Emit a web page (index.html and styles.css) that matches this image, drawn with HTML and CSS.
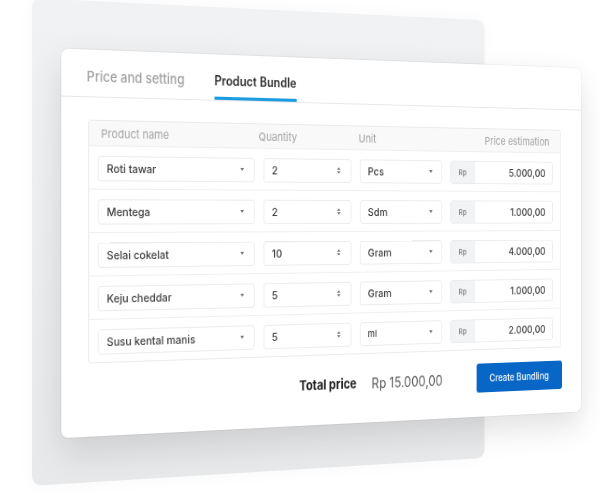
FILE: index.html
```html
<!DOCTYPE html>
<html lang="id">
<head>
<meta charset="utf-8">
<title>Product Bundle</title>
<link rel="stylesheet" href="styles.css">
</head>
<body>
<div class="scene">
  <div class="stage">
    <div class="back"></div>
    <div class="card">
      <div class="tabs">
        <div class="tab">Price and setting</div>
        <div class="tab active">Product Bundle</div>
      </div>
      <div class="content">
        <div class="table">
          <div class="thead">
            <div class="th th-name">Product name</div>
            <div class="th th-qty">Quantity</div>
            <div class="th th-unit">Unit</div>
            <div class="th th-price">Price estimation</div>
          </div>

          <div class="row">
            <div class="field select"><span>Roti tawar</span><i class="caret"></i></div>
            <div class="field select"><span>2</span><svg class="spin" viewBox="0 0 5 8"><path d="M0 3.2 2.5 0 5 3.2Z M0 4.8 2.5 8 5 4.8Z"/></svg></div>
            <div class="field select"><span>Pcs</span><i class="caret"></i></div>
            <div class="field price"><span class="addon">Rp</span><span class="val">5.000,00</span></div>
          </div>

          <div class="row">
            <div class="field select"><span>Mentega</span><i class="caret"></i></div>
            <div class="field select"><span>2</span><svg class="spin" viewBox="0 0 5 8"><path d="M0 3.2 2.5 0 5 3.2Z M0 4.8 2.5 8 5 4.8Z"/></svg></div>
            <div class="field select"><span>Sdm</span><i class="caret"></i></div>
            <div class="field price"><span class="addon">Rp</span><span class="val">1.000,00</span></div>
          </div>

          <div class="row">
            <div class="field select"><span>Selai cokelat</span><i class="caret"></i></div>
            <div class="field select"><span>10</span><svg class="spin" viewBox="0 0 5 8"><path d="M0 3.2 2.5 0 5 3.2Z M0 4.8 2.5 8 5 4.8Z"/></svg></div>
            <div class="field select"><span>Gram</span><i class="caret"></i></div>
            <div class="field price"><span class="addon">Rp</span><span class="val">4.000,00</span></div>
          </div>

          <div class="row">
            <div class="field select"><span>Keju cheddar</span><i class="caret"></i></div>
            <div class="field select"><span>5</span><svg class="spin" viewBox="0 0 5 8"><path d="M0 3.2 2.5 0 5 3.2Z M0 4.8 2.5 8 5 4.8Z"/></svg></div>
            <div class="field select"><span>Gram</span><i class="caret"></i></div>
            <div class="field price"><span class="addon">Rp</span><span class="val">1.000,00</span></div>
          </div>

          <div class="row">
            <div class="field select"><span>Susu kental manis</span><i class="caret"></i></div>
            <div class="field select"><span>5</span><svg class="spin" viewBox="0 0 5 8"><path d="M0 3.2 2.5 0 5 3.2Z M0 4.8 2.5 8 5 4.8Z"/></svg></div>
            <div class="field select"><span class="small">ml</span><i class="caret"></i></div>
            <div class="field price"><span class="addon">Rp</span><span class="val">2.000,00</span></div>
          </div>
        </div>

        <div class="footer">
          <span class="total-label">Total price</span>
          <span class="total-value">Rp 15.000,00</span>
          <span class="btn">Create Bundling</span>
        </div>
      </div>
    </div>
  </div>
</div>
</body>
</html>
```

FILE: styles.css
```css
* { box-sizing: border-box; }

html, body {
  margin: 0;
  padding: 0;
  overflow: hidden;
  background: #ffffff;
}

body {
  width: 600px;
  height: 498px;
  font-family: Inter, "Noto Sans", "Liberation Sans", sans-serif;
}

.scene {
  padding: 13px 0 0 2.5px;
}

.stage {
  display: grid;
  width: 639px;
  height: 455px;
  transform-origin: 334.1px 200.9px;
  transform: perspective(2540px) rotateY(31.8deg);
}

.back {
  grid-area: 1 / 1;
  align-self: start;
  justify-self: start;
  width: 514px;
  height: 454px;
  border-radius: 9px;
  background: linear-gradient(#f1f2f4, #e8e9eb);
  box-shadow: 0 0 18px rgba(0, 0, 0, 0.03);
}

.card {
  grid-area: 1 / 1;
  align-self: start;
  justify-self: start;
  margin: 46px 0 0 29.6px;
  width: 609px;
  height: 365px;
  background: #ffffff;
  border-radius: 7px;
  box-shadow: 0 14px 34px rgba(0, 0, 0, 0.12), 0 0 0 1px rgba(0, 0, 0, 0.04);
  overflow: hidden;
}

/* tabs */
.tabs {
  display: flex;
  gap: 33px;
  height: 45px;
  padding: 0 27px;
  border-bottom: 1px solid #e6e7e9;
}

.tab {
  display: flex;
  align-items: center;
  padding-top: 6px;
  font-size: 13px;
  font-weight: 500;
  color: #a0a0a0;
}

.tab.active {
  font-size: 12.5px;
  font-weight: 600;
  color: #2b2b2b;
  box-shadow: inset 0 -3px 0 #1b9ce2;
}

/* content */
.content {
  padding: 21px 26px 0 28px;
}

.table {
  border: 1px solid #e9eaec;
  border-radius: 3px;
}

.thead,
.row {
  display: grid;
  grid-template-columns: 171px 102px 100px 131px;
  column-gap: 10px;
  padding-left: 9px;
  padding-right: 10px;
}

.thead {
  height: 24px;
  align-items: center;
  background: #f9f9fa;
  border-bottom: 1px solid #eeeff1;
  font-size: 11px;
  color: #a3a3a3;
}

.th-name { padding-left: 4px; }
.th-qty { margin-left: -5px; }
.th-unit { margin-left: -1px; }
.th-price { text-align: right; padding-right: 4px; }

.row {
  padding-top: 8.5px;
  padding-bottom: 7.5px;
  border-bottom: 1px solid #eeeff1;
}

.row:last-child {
  border-bottom: 0;
}

.field {
  height: 24px;
  border: 1px solid #ebecee;
  border-radius: 3px;
  display: flex;
  align-items: center;
  font-size: 11px;
  font-weight: 500;
  color: #3c3c3c;
}

.select {
  justify-content: space-between;
  padding: 0 11px 0 9px;
}

.small {
  font-size: 9.5px;
}

.caret {
  width: 0;
  height: 0;
  border-left: 2.5px solid transparent;
  border-right: 2.5px solid transparent;
  border-top: 3px solid #6e6e6e;
}

.spin {
  width: 4px;
  height: 7px;
  fill: #707070;
  margin-right: 1px;
}

.price {
  overflow: hidden;
}

.addon {
  width: 30px;
  height: 100%;
  display: flex;
  align-items: center;
  justify-content: center;
  background: #f2f3f5;
  font-size: 8px;
  color: #7a7a7a;
}

.val {
  flex: 1;
  text-align: right;
  padding-right: 8px;
  color: #404040;
}

/* footer */
.footer {
  display: flex;
  justify-content: flex-end;
  align-items: center;
  padding: 14px 0 0 0;
  margin-right: -1px;
}

.total-label {
  font-size: 13px;
  font-weight: 700;
  color: #1c1c1c;
  margin-right: 18px;
}

.total-value {
  font-size: 14px;
  color: #5a5a5a;
  margin-right: 42px;
}

.btn {
  width: 110px;
  height: 30px;
  border-radius: 3px;
  background: #0866c6;
  color: #ffffff;
  font-size: 10px;
  font-weight: 500;
  display: flex;
  align-items: center;
  justify-content: center;
}
```
